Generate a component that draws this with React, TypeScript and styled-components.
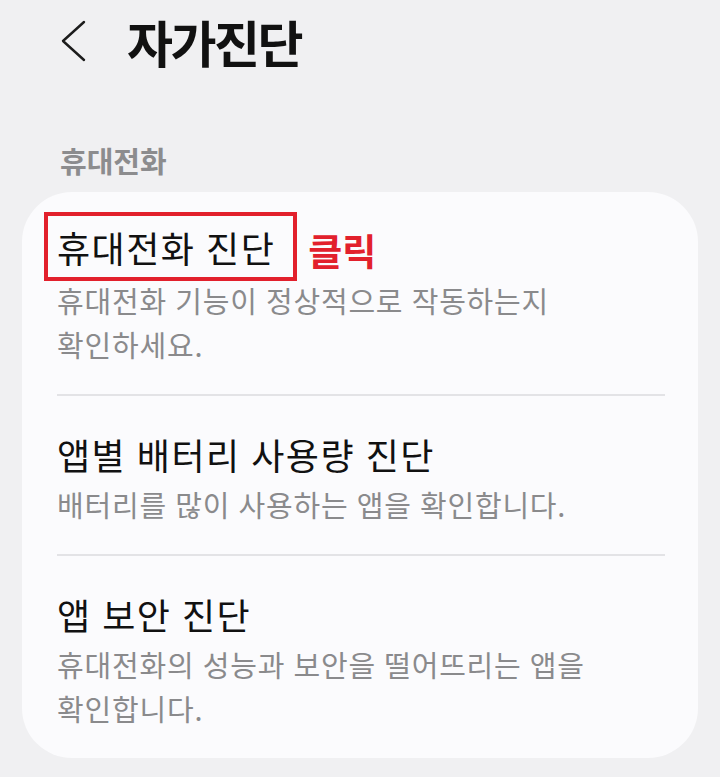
import React from 'react'
import styled, { createGlobalStyle } from 'styled-components'

const Colors = {
  Page: '#f0f0f2',
  Card: '#fbfbfd',
  Text: '#111111',
  Sub: '#8a8a8c',
  Divider: '#e3e3e6',
  Red: '#e2202c',
}

const Font = `'Noto Sans CJK KR', 'Noto Sans', sans-serif`

const GlobalStyle = createGlobalStyle`
  html, body {
    margin: 0;
    padding: 0;
    background: ${Colors.Page};
  }
  body {
    font-family: ${Font};
    -webkit-font-smoothing: antialiased;
  }
  #root {
    min-height: 100vh;
  }
`

interface DiagnosisItem {
  title: string
  description: string[]
  highlighted?: boolean
}

const items: DiagnosisItem[] = [
  {
    title: '휴대전화 진단',
    description: ['휴대전화 기능이 정상적으로 작동하는지', '확인하세요.'],
    highlighted: true,
  },
  {
    title: '앱별 배터리 사용량 진단',
    description: ['배터리를 많이 사용하는 앱을 확인합니다.'],
  },
  {
    title: '앱 보안 진단',
    description: ['휴대전화의 성능과 보안을 떨어뜨리는 앱을', '확인합니다.'],
  },
]

const BackIcon = () => (
  <svg width="26" height="42" viewBox="0 0 26 42" fill="none">
    <polyline points="23,2 2,21 23,40" stroke="#1c1c1c" strokeWidth="2.4" strokeLinecap="round" strokeLinejoin="round" />
  </svg>
)

export default function App() {
  return (
    <Page>
      <GlobalStyle />
      <Header>
        <BackButton aria-label="뒤로">
          <BackIcon />
        </BackButton>
        <PageTitle>자가진단</PageTitle>
      </Header>
      <SectionLabel>휴대전화</SectionLabel>
      <Card>
        {items.map((item) => (
          <ItemRow key={item.title}>
            <TitleLine>
              {item.highlighted ? (
                <>
                  <Highlight>
                    <ItemTitle>{item.title}</ItemTitle>
                  </Highlight>
                  <ClickLabel>클릭</ClickLabel>
                </>
              ) : (
                <ItemTitle>{item.title}</ItemTitle>
              )}
            </TitleLine>
            <ItemDescription>
              {item.description.map((line) => (
                <span key={line}>{line}</span>
              ))}
            </ItemDescription>
          </ItemRow>
        ))}
      </Card>
    </Page>
  )
}

const Page = styled.div`
  width: 720px;
  min-height: 777px;
  background: ${Colors.Page};
  overflow: hidden;
`

const Header = styled.header`
  display: flex;
  align-items: center;
  height: 82px;
  padding-left: 61px;
  gap: 40px;
`

const BackButton = styled.button`
  display: flex;
  align-items: center;
  justify-content: center;
  padding: 0;
  border: none;
  background: none;
`

const PageTitle = styled.h1`
  margin: 0;
  font-family: ${Font};
  font-size: 50px;
  line-height: 58px;
  font-weight: 700;
  letter-spacing: -2.5px;
  color: ${Colors.Text};
`

const SectionLabel = styled.h2`
  margin: 60px 0 14px 60px;
  font-family: ${Font};
  font-size: 29px;
  line-height: 36px;
  font-weight: 700;
  letter-spacing: 0;
  color: #8c8c8e;
`

const Card = styled.section`
  margin: 0 22px;
  padding: 0 33px 0 35px;
  background: ${Colors.Card};
  border-radius: 50px;
`

const ItemRow = styled.article`
  display: flex;
  flex-direction: column;
  padding: 36px 0 28px;

  & + & {
    border-top: 2px solid ${Colors.Divider};
  }
`

const TitleLine = styled.div`
  display: flex;
  align-items: center;
  height: 44px;
`

const ItemTitle = styled.span`
  font-family: ${Font};
  font-size: 36px;
  line-height: 44px;
  font-weight: 400;
  letter-spacing: 1.5px;
  word-spacing: 1px;
  color: ${Colors.Text};
  white-space: nowrap;
`

const Highlight = styled.div`
  display: flex;
  align-items: center;
  height: 61px;
  margin: -16px 0 -9px -13px;
  padding: 0 18px 0 9px;
  border: 4px solid ${Colors.Red};
`

const ClickLabel = styled.span`
  margin-left: 11px;
  font-family: ${Font};
  font-size: 37px;
  line-height: 44px;
  font-weight: 700;
  letter-spacing: 0;
  color: ${Colors.Red};
`

const ItemDescription = styled.p`
  display: flex;
  flex-direction: column;
  margin: 6px 0 0;
  font-family: ${Font};
  font-size: 29px;
  line-height: 44px;
  font-weight: 400;
  letter-spacing: 0.8px;
  word-spacing: 1px;
  color: ${Colors.Sub};
`
